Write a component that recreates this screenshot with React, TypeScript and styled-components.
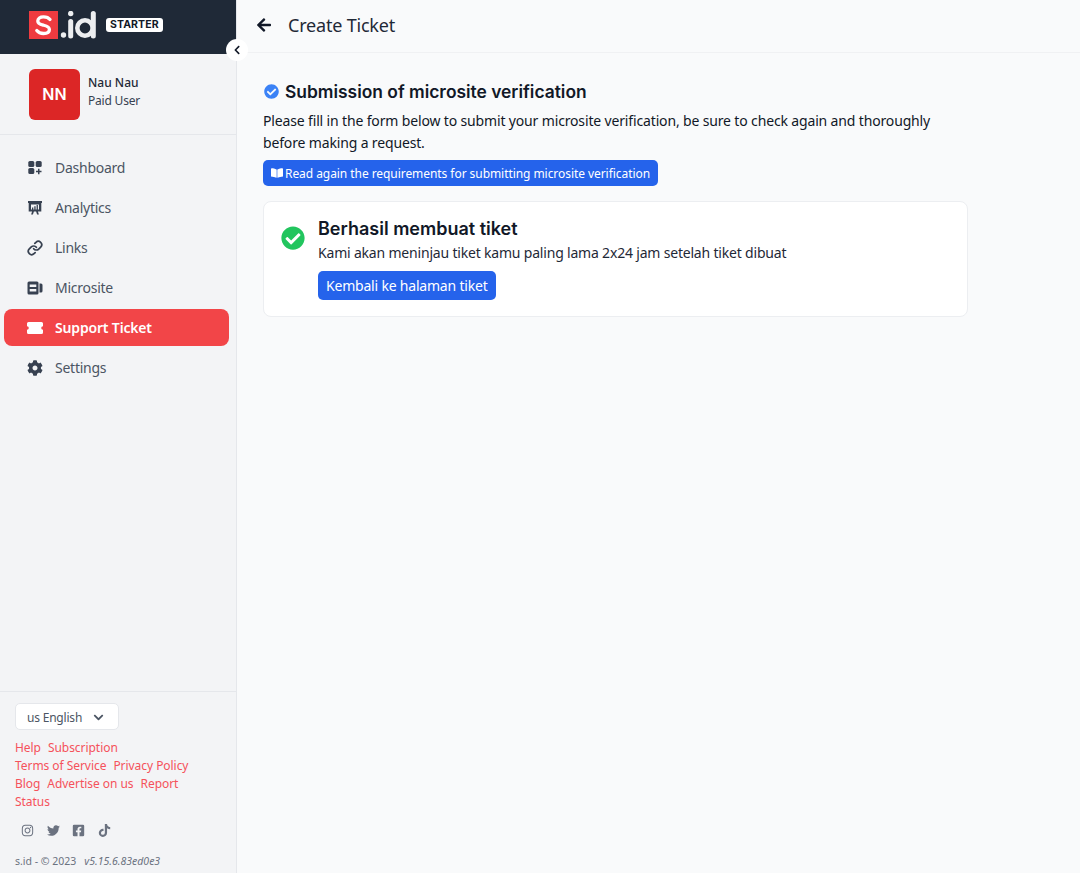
import styled, { createGlobalStyle } from 'styled-components';
import {
  FaArrowLeft,
  FaBookOpen,
  FaCheckCircle,
  FaChevronDown,
  FaChevronLeft,
  FaCog,
  FaFacebookSquare,
  FaInstagram,
  FaTiktok,
  FaTwitter,
} from 'react-icons/fa';
import { Link as LinkIcon } from 'lucide-react';
import type { ReactNode } from 'react';

const GlobalStyle = createGlobalStyle`
  * { box-sizing: border-box; }
  html, body { margin: 0; height: 100%; }
  body {
    font-family: "Noto Sans", "Open Sans", sans-serif;
    color: #111827;
    background: #f9fafb;
  }
`;

const Layout = styled.div`
  display: flex;
  height: 873px;
  overflow: hidden;
`;

const Sidebar = styled.aside`
  position: relative;
  display: flex;
  flex-direction: column;
  width: 237px;
  flex-shrink: 0;
  background: #f3f4f6;
  border-right: 1px solid #e5e7eb;
`;

const Brand = styled.div`
  display: flex;
  align-items: center;
  gap: 8px;
  height: 54px;
  padding: 0 0 4px 29px;
  background: #1f2937;
`;

const Plan = styled.span`
  padding: 0 4px;
  border-radius: 3px;
  background: #fff;
  color: #111827;
  font: 700 10.5px/14px Inter, sans-serif;
  letter-spacing: 0.1px;
`;

const CollapseButton = styled.button`
  position: absolute;
  top: 39px;
  left: 226px;
  display: flex;
  align-items: center;
  justify-content: center;
  width: 22px;
  height: 22px;
  padding: 0;
  border: 0;
  border-radius: 50%;
  background: #fff;
  color: #111827;
  font-size: 10px;
`;

const Profile = styled.div`
  display: flex;
  align-items: center;
  gap: 8px;
  height: 81px;
  padding-left: 29px;
  border-bottom: 1px solid #e5e7eb;
`;

const Avatar = styled.div`
  display: flex;
  align-items: center;
  justify-content: center;
  width: 51px;
  height: 51px;
  border-radius: 6px;
  background: #dc2626;
  color: #fff;
  font: 600 16px Inter, sans-serif;
`;

const ProfileText = styled.div`
  margin-top: -4px;
`;

const ProfileName = styled.div`
  font-size: 12px;
  font-weight: 500;
  line-height: 18px;
  color: #1f2937;
`;

const ProfileRole = styled.div`
  font-size: 12px;
  line-height: 18px;
  letter-spacing: -0.2px;
  color: #374151;
`;

const Nav = styled.nav`
  display: flex;
  flex: 1;
  flex-direction: column;
  padding: 14px 7px 0 4px;
`;

const NavItem = styled.a<{ $active?: boolean }>`
  display: flex;
  align-items: center;
  gap: 12px;
  height: 37px;
  margin-bottom: 3px;
  padding-left: 23px;
  border-radius: 8px;
  background: ${(p) => (p.$active ? '#f24548' : 'transparent')};
  color: ${(p) => (p.$active ? '#fff' : '#4b5563')};
  font-size: 14px;
  font-weight: ${(p) => (p.$active ? 600 : 400)};
  letter-spacing: ${(p) => (p.$active ? -0.17 : -0.25)}px;

  svg {
    width: 16px;
    height: 16px;
    color: ${(p) => (p.$active ? '#fff' : '#374151')};
  }
`;

const Footer = styled.footer`
  padding: 11px 15px 5px;
  border-top: 1px solid #e5e7eb;
`;

const LanguageSelect = styled.div`
  display: inline-flex;
  align-items: center;
  gap: 11px;
  height: 27px;
  padding: 1px 14px 0 11px;
  border: 1px solid #e5e7eb;
  border-radius: 5px;
  background: #fff;
  color: #4b5563;
  font-size: 12px;
  letter-spacing: -0.2px;

  svg {
    font-size: 11px;
  }
`;

const FooterLinks = styled.div`
  display: flex;
  flex-wrap: wrap;
  column-gap: 7px;
  max-width: 195px;
  margin-top: 9px;
  font-size: 12px;
  line-height: 18px;
  letter-spacing: -0.05px;
  color: #f5525b;
`;

const Socials = styled.div`
  display: flex;
  gap: 12.5px;
  margin-top: 13px;
  padding-left: 6px;
  color: #6b7280;
  font-size: 13px;
`;

const Copyright = styled.div`
  display: flex;
  gap: 8px;
  margin-top: 17px;
  font-size: 10.5px;
  line-height: 14px;
  color: #6b7280;

  em {
    font-style: italic;
  }
`;

const Main = styled.main`
  flex: 1;
  min-width: 0;
`;

const TopBar = styled.header`
  display: flex;
  align-items: center;
  gap: 16px;
  height: 53px;
  padding: 0 0 2px 19px;
  border-bottom: 1px solid #f0f1f3;
  font-size: 18px;
  letter-spacing: -0.2px;
  color: #1f2937;

  svg {
    color: #111827;
    font-size: 16px;
    margin-top: -1px;
  }
`;

const Content = styled.div`
  width: 731px;
  padding: 26px 0 0 26px;
`;

const HeadingRow = styled.div`
  display: flex;
  align-items: center;
  gap: 6px;
  padding-left: 1px;
  color: #3b82f6;
  font-size: 15px;
`;

const Heading = styled.h1`
  margin: 0;
  color: #111827;
  font: 600 17.4px/25px Inter, sans-serif;
`;

const Intro = styled.p`
  margin: 6px 0 6px;
  font-size: 14px;
  line-height: 22px;
  letter-spacing: -0.15px;
  color: #111827;
`;

const BlueButton = styled.button<{ $large?: boolean }>`
  display: inline-flex;
  align-items: center;
  gap: 2px;
  height: ${(p) => (p.$large ? 30 : 26)}px;
  padding: 0 8px;
  border: 0;
  border-radius: 5px;
  background: #2563eb;
  color: #fff;
  font-family: inherit;
  font-size: ${(p) => (p.$large ? 14 : 12)}px;
  letter-spacing: ${(p) => (p.$large ? -0.2 : -0.06)}px;
`;

const Card = styled.section`
  display: flex;
  gap: 13px;
  height: 116px;
  margin-top: 15px;
  padding: 16px 17px;
  border: 1px solid #eceef1;
  border-radius: 8px;
  background: #fff;
`;

const CardIcon = styled.div`
  display: flex;
  align-items: center;
  color: #22c55e;
  font-size: 24px;
  height: 40px;
`;

const CardBody = styled.div`
  display: flex;
  flex-direction: column;
  align-items: flex-start;
`;

const CardTitle = styled.h2`
  margin: 0;
  color: #111827;
  font: 600 18px/22px Inter, sans-serif;
`;

const CardText = styled.p`
  margin: 2px 0 7px;
  font-size: 14px;
  line-height: 22px;
  letter-spacing: -0.19px;
  color: #1f2937;
`;

const Logo = () => (
  <svg width="69" height="28" viewBox="0 0 69 28" fill="none">
    <rect width="29" height="28" fill="#ef3b40" />
    <path
      d="M21 8.500C19.500 6.500 17.500 5.800 14.500 5.800C11 5.800 8.800 7.500 8.800 10C8.800 13 11.500 13.500 14.500 14.200C17.500 14.900 20.400 15.500 20.400 18.500C20.400 21 18 22.500 14.500 22.500C11.500 22.500 9.300 21.500 7.800 19.500"
      stroke="#fff"
      strokeWidth="3.300"
      strokeLinecap="round"
    />
    <circle cx="34.500" cy="24" r="2.700" fill="#eceef0" />
    <circle cx="41.700" cy="2.500" r="2.700" fill="#eceef0" />
    <path d="M41.700 10.500V25" stroke="#eceef0" strokeWidth="5" strokeLinecap="round" />
    <circle cx="56" cy="17" r="7.700" stroke="#eceef0" strokeWidth="4.600" />
    <path d="M64.300 2.500V25" stroke="#eceef0" strokeWidth="5" strokeLinecap="round" />
  </svg>
);

const DashboardIcon = () => (
  <svg viewBox="0 0 16 16" fill="currentColor">
    <rect x="1.300" y="1" width="6" height="6" rx="1.600" />
    <rect x="8.700" y="1" width="6" height="6" rx="1.600" />
    <rect x="1.300" y="8" width="6" height="6" rx="1.600" />
    <path d="M11 8.800h1.500v2h2v1.500h-2v2H11v-2H9v-1.500h2z" />
  </svg>
);

const AnalyticsIcon = () => (
  <svg viewBox="0 0 16 16" fill="currentColor">
    <path fillRule="evenodd" d="M1 1h14v2h-.7v8.500h-3.400l1 3h-1.800l-1-3H6.900l-1 3H4.100l1-3H1.700V3H1zM4 4.500v5h8v-5z" />
    <path d="M5 7.500h1.300V10H5zM7.300 6.300h1.300V10H7.300zM9.600 5h1.300v5H9.600z" />
  </svg>
);

const MicrositeIcon = () => (
  <svg viewBox="0 0 16 16" fill="currentColor">
    <path
      fillRule="evenodd"
      d="M2 1.500h8A1.500 1.500 0 0 1 11.500 3v10a1.500 1.500 0 0 1-1.500 1.500H2A1.500 1.500 0 0 1 .5 13V3A1.500 1.500 0 0 1 2 1.500zM2.700 4.500v2.500h6.600V4.500zm0 4.500v2.500h6.600V9z"
    />
    <path d="M12.500 3.500h1.500a1.500 1.500 0 0 1 1.500 1.500v6a1.500 1.500 0 0 1-1.500 1.500h-1.500z" />
  </svg>
);

const TicketIcon = () => (
  <svg viewBox="0 0 16 16" fill="currentColor">
    <path d="M1.500 2h13A1.500 1.500 0 0 1 16 3.500v2.700a1.800 1.800 0 0 0 0 3.600v2.700a1.500 1.500 0 0 1-1.500 1.500h-13A1.500 1.500 0 0 1 0 12.500V9.800a1.800 1.800 0 0 0 0-3.600V3.500A1.500 1.500 0 0 1 1.500 2z" />
  </svg>
);

const navItems: { label: string; icon: ReactNode; active?: boolean }[] = [
  { label: 'Dashboard', icon: <DashboardIcon /> },
  { label: 'Analytics', icon: <AnalyticsIcon /> },
  { label: 'Links', icon: <LinkIcon strokeWidth={2.6} /> },
  { label: 'Microsite', icon: <MicrositeIcon /> },
  { label: 'Support Ticket', icon: <TicketIcon />, active: true },
  { label: 'Settings', icon: <FaCog /> },
];

const footerLinks = ['Help', 'Subscription', 'Terms of Service', 'Privacy Policy', 'Blog', 'Advertise on us', 'Report', 'Status'];

export default function App() {
  return (
    <>
      <GlobalStyle />
      <Layout>
        <Sidebar>
          <Brand>
            <Logo />
            <Plan>STARTER</Plan>
          </Brand>
          <CollapseButton>
            <FaChevronLeft />
          </CollapseButton>
          <Profile>
            <Avatar>NN</Avatar>
            <ProfileText>
              <ProfileName>Nau Nau</ProfileName>
              <ProfileRole>Paid User</ProfileRole>
            </ProfileText>
          </Profile>
          <Nav>
            {navItems.map((item) => (
              <NavItem key={item.label} $active={item.active}>
                {item.icon}
                {item.label}
              </NavItem>
            ))}
          </Nav>
          <Footer>
            <LanguageSelect>
              us English
              <FaChevronDown />
            </LanguageSelect>
            <FooterLinks>
              {footerLinks.map((link) => (
                <span key={link}>{link}</span>
              ))}
            </FooterLinks>
            <Socials>
              <FaInstagram />
              <FaTwitter />
              <FaFacebookSquare />
              <FaTiktok />
            </Socials>
            <Copyright>
              <span>s.id - © 2023</span>
              <em>v5.15.6.83ed0e3</em>
            </Copyright>
          </Footer>
        </Sidebar>
        <Main>
          <TopBar>
            <FaArrowLeft />
            Create Ticket
          </TopBar>
          <Content>
            <HeadingRow>
              <FaCheckCircle />
              <Heading>Submission of microsite verification</Heading>
            </HeadingRow>
            <Intro>
              Please fill in the form below to submit your microsite verification, be sure to check again and thoroughly
              before making a request.
            </Intro>
            <BlueButton>
              <FaBookOpen />
              Read again the requirements for submitting microsite verification
            </BlueButton>
            <Card>
              <CardIcon>
                <FaCheckCircle />
              </CardIcon>
              <CardBody>
                <CardTitle>Berhasil membuat tiket</CardTitle>
                <CardText>Kami akan meninjau tiket kamu paling lama 2x24 jam setelah tiket dibuat</CardText>
                <BlueButton $large>Kembali ke halaman tiket</BlueButton>
              </CardBody>
            </Card>
          </Content>
        </Main>
      </Layout>
    </>
  );
}
